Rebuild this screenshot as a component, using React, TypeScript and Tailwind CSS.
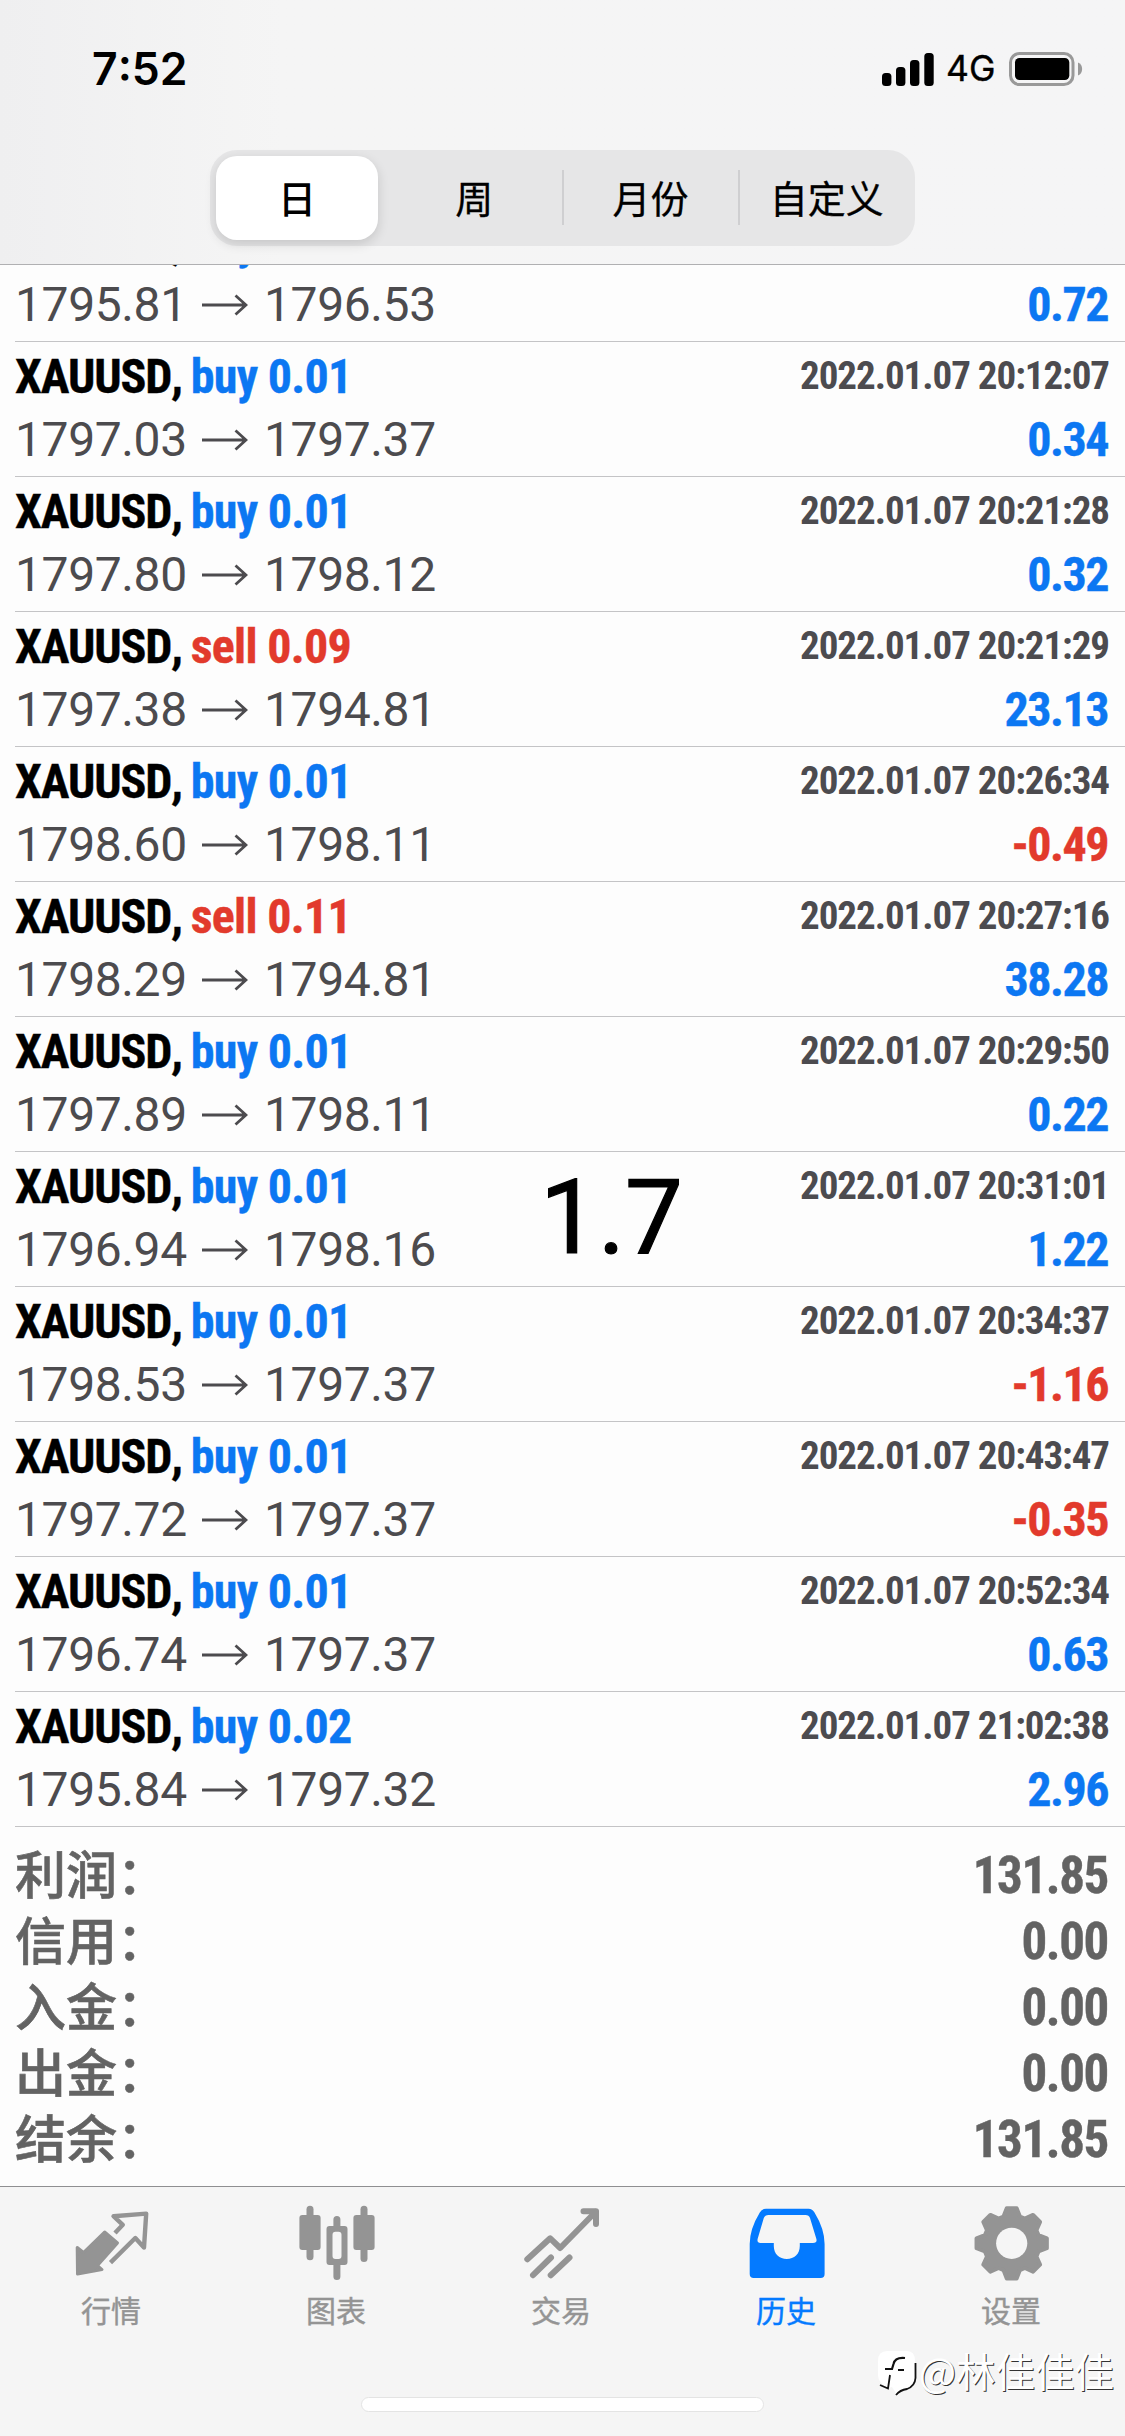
import clsx from "clsx";
import React from "react";

type Deal = {
  side: 'buy' | 'sell'
  volume: string
  open: string
  close: string
  time?: string
  profit: string
}

const deals: Deal[] = [
  { side: 'buy', volume: '0.01', open: '1795.81', close: '1796.53', profit: '0.72' },
  { side: 'buy', volume: '0.01', open: '1797.03', close: '1797.37', time: '2022.01.07 20:12:07', profit: '0.34' },
  { side: 'buy', volume: '0.01', open: '1797.80', close: '1798.12', time: '2022.01.07 20:21:28', profit: '0.32' },
  { side: 'sell', volume: '0.09', open: '1797.38', close: '1794.81', time: '2022.01.07 20:21:29', profit: '23.13' },
  { side: 'buy', volume: '0.01', open: '1798.60', close: '1798.11', time: '2022.01.07 20:26:34', profit: '-0.49' },
  { side: 'sell', volume: '0.11', open: '1798.29', close: '1794.81', time: '2022.01.07 20:27:16', profit: '38.28' },
  { side: 'buy', volume: '0.01', open: '1797.89', close: '1798.11', time: '2022.01.07 20:29:50', profit: '0.22' },
  { side: 'buy', volume: '0.01', open: '1796.94', close: '1798.16', time: '2022.01.07 20:31:01', profit: '1.22' },
  { side: 'buy', volume: '0.01', open: '1798.53', close: '1797.37', time: '2022.01.07 20:34:37', profit: '-1.16' },
  { side: 'buy', volume: '0.01', open: '1797.72', close: '1797.37', time: '2022.01.07 20:43:47', profit: '-0.35' },
  { side: 'buy', volume: '0.01', open: '1796.74', close: '1797.37', time: '2022.01.07 20:52:34', profit: '0.63' },
  { side: 'buy', volume: '0.02', open: '1795.84', close: '1797.32', time: '2022.01.07 21:02:38', profit: '2.96' },
]

const totals = [
  { label: '利润：', value: '131.85' },
  { label: '信用：', value: '0.00' },
  { label: '入金：', value: '0.00' },
  { label: '出金：', value: '0.00' },
  { label: '结余：', value: '131.85' },
]

const periods = ['日', '周', '月份', '自定义']

// eight teeth, four points each
const gearPoints = Array.from({ length: 8 }, (_, i) => {
  const at = (deg: number, r: number) => {
    const a = ((i * 45 + deg - 90) * Math.PI) / 180
    return `${(38.7 + r * Math.cos(a)).toFixed(2)},${(39.3 + r * Math.sin(a)).toFixed(2)}`
  }
  return [at(-17, 28), at(-8, 35.5), at(8, 35.5), at(17, 28)].join(' ')
}).join(' ')

const QuotesIcon = () => (
  <svg viewBox="0 0 80 80" className="ml-[3px] size-20" fill="none" stroke="currentColor" strokeLinejoin="round">
    <path d="M4.2 43.5 10.5 48.5 31.6 28 44.5 39 24.5 61.5 29 65.5 4.5 70Z" fill="currentColor" strokeWidth="3" />
    <path d="M42 29 49.8 20.8 40.5 12.2 73.2 9.6 71 43.5 62.3 34 37.5 58.6" strokeWidth="4.4" />
  </svg>
)

const ChartIcon = () => (
  <svg viewBox="0 0 80 80" className="ml-[3px] size-20" fill="currentColor">
    <rect x="8.5" y="1.7" width="7" height="54.5" rx="3.5" />
    <rect x="1.4" y="11" width="21.2" height="35" rx="3" />
    <rect x="62.5" y="1.7" width="7" height="56.3" rx="3.5" />
    <rect x="55.4" y="11" width="21.2" height="35" rx="3" />
    <path d="M35.4 24v-8.5a3.5 3.5 0 0 1 7 0V24ZM35.4 59v13.5a3.5 3.5 0 0 0 7 0V59Z" />
    <path fillRule="evenodd" d="M31.5 22h15a3 3 0 0 1 3 3v33a3 3 0 0 1-3 3h-15a3 3 0 0 1-3-3V25a3 3 0 0 1 3-3Zm6 5.7a3 3 0 0 0-3 3V52a3 3 0 0 0 3 3h3a3 3 0 0 0 3-3V30.7a3 3 0 0 0-3-3Z" />
  </svg>
)

const TradeIcon = () => (
  <svg viewBox="0 0 80 80" className="ml-[3px] size-20" fill="none" stroke="currentColor" strokeWidth="6" strokeLinecap="round" strokeLinejoin="round">
    <path d="M4.3 55.3 27.2 34.3 37.2 44 72.5 8" />
    <path d="M60.5 7.2H73V20" />
    <path d="M28 53.5 10 71.2M46.5 53.5 27.7 71.2" />
  </svg>
)

const HistoryIcon = () => (
  <svg viewBox="0 0 80 80" className="ml-[3px] size-20" fill="currentColor">
    <path fillRule="evenodd" d="M18 4.7H60.5Q64.5 4.7 66.5 8.5Q76.6 25 76.6 40V70Q76.6 74 72.6 74H5.7Q1.7 74 1.7 70V40Q1.7 25 11.8 8.5Q14 4.7 18 4.7ZM20.5 11Q17 11 15.8 14L9.6 35Q8.8 39 12.5 39H25.8V42C25.8 50 31.5 55 38.8 55S51.8 50 51.8 42V39H65Q69.4 39 68.4 35L62 14Q61 11 57.5 11Z" />
  </svg>
)

const SettingsIcon = () => (
  <svg viewBox="0 0 80 80" className="ml-[3px] size-20">
    <polygon points={gearPoints} fill="currentColor" stroke="currentColor" strokeWidth="4" strokeLinejoin="round" />
    <circle cx="38.7" cy="39.3" r="15.6" fill="#f5f5f5" />
  </svg>
)

const tabs = [
  { label: '行情', icon: QuotesIcon },
  { label: '图表', icon: ChartIcon },
  { label: '交易', icon: TradeIcon },
  { label: '历史', icon: HistoryIcon, active: true },
  { label: '设置', icon: SettingsIcon },
]

const StatusBar = () => (
  <div className="flex h-[138px] items-center justify-between pl-[92px] pr-[42px]">
    <span className="mt-px font-['Inter',sans-serif] text-[44.5px] font-semibold leading-none">7:52</span>
    <div className="flex items-center">
      <svg viewBox="0 0 52 33" className="h-[33px] w-[52px]">
        <rect x="0" y="20" width="9.4" height="13" rx="3.5" />
        <rect x="14" y="14" width="9.4" height="19" rx="3.5" />
        <rect x="28" y="7" width="9.4" height="26" rx="3.5" />
        <rect x="42.3" y="0" width="9.4" height="33" rx="3.5" />
      </svg>
      <span className="ml-3 w-[51px] whitespace-nowrap font-['Inter',sans-serif] text-[35.5px] leading-none [-webkit-text-stroke:0.4px_black]">4G</span>
      <svg viewBox="0 0 74 34" className="ml-3 h-[34px] w-[74px]">
        <rect x="1.5" y="1.5" width="62.5" height="31" rx="9" fill="none" stroke="#999" strokeWidth="3" />
        <rect x="6" y="6" width="54.3" height="22" rx="4.5" />
        <path d="M69 10.5C74.5 12 74.5 22 69 23.5Z" fill="#999" />
      </svg>
    </div>
  </div>
)

const DealRow = ({ deal }: { deal: Deal }) => (
  <li className="ml-[15px] h-[135px] shrink-0 border-b border-[#c4c4c6] pr-4 pt-[3px] leading-[63px]">
    <div className="flex h-[63px] justify-between font-bold [font-stretch:75%]">
      <p className="text-[48px] [-webkit-text-stroke:0.4px_currentColor]">
        <span className="tracking-[-1.2px]">XAUUSD,</span>
        <span className={clsx('ml-[9px] tracking-[-0.7px]', deal.side === 'buy' ? 'text-[#0c77f2]' : 'text-[#e23a2c]')}>
          {deal.side} {deal.volume}
        </span>
      </p>
      {deal.time && <p className="text-[39px] tracking-[-1.05px] text-[#4c4b4f]">{deal.time}</p>}
    </div>
    <div className="flex justify-between text-[48px]">
      <p className="flex items-center tracking-[-0.4px] text-[#4c4b4e]">
        <span className="w-[187px]">{deal.open}</span>
        <svg viewBox="0 0 46 22" className="h-[22px] w-[46px]" fill="none" stroke="currentColor" strokeWidth="2.8">
          <path d="M0 11H44M33.5 1.5 44 11 33.5 20.5" />
        </svg>
        <span className="ml-4">{deal.close}</span>
      </p>
      <p className={clsx('mr-px font-bold tracking-[-1.5px] [-webkit-text-stroke:0.4px_currentColor] [font-stretch:75%]', deal.profit.startsWith('-') ? 'text-[#e23a2c]' : 'text-[#0c77f2]')}>
        {deal.profit}
      </p>
    </div>
  </li>
)

const Watermark = () => (
  <div className="absolute bottom-[37px] right-[11px] flex items-center">
    <svg viewBox="0 0 42 50" className="mt-1 h-[50px] w-[42px]" fill="none">
      <path d="M10 2H30Q38 2 38 12V28Q38 37 29 40L20 46 15 38 11 39Q1 34 1 26V12Q1 2 10 2Z" fill="#fff" />
      <path d="M38.5 14V29Q38 37 30 40Q23 41 19 46M3 36 11 39.5 13 26" stroke="#111" strokeWidth="1.8" />
      <path d="M28 9Q18 8 16.5 15L15 20H8M21 21H27" stroke="#111" strokeWidth="2.2" />
    </svg>
    <span className="-mt-1 font-['Noto_Sans_CJK_SC',sans-serif] text-[39.5px] leading-[50px] text-white [text-shadow:1px_1px_0_#333]">@林佳佳佳</span>
  </div>
)

const App = () => {
  return (
    <div className="relative flex h-[2436px] w-[1125px] flex-col overflow-hidden bg-[#fdfdfd] font-['Roboto','Noto_Sans_CJK_SC',sans-serif] text-black [font-kerning:none]">
      <header className="h-[265px] shrink-0 border-b border-[#b0b0b2] bg-linear-to-r from-[#efeff0] via-[#f5f5f5] via-25% to-[#f5f5f6]">
        <StatusBar />
        <div className="mx-auto mt-3 grid h-24 w-[705px] grid-cols-4 rounded-[27px] bg-[#e6e6e7] py-1.5">
          {periods.map((period, i) => (
            <button
              key={period}
              className={clsx(
                "relative pb-[3px] text-[38px] leading-none font-['Noto_Sans_CJK_SC',sans-serif]",
                i === 0 && 'ml-1.5 mr-2 rounded-[21px] bg-white font-medium shadow-[0_4px_12px_rgba(0,0,0,0.14)]',
                i > 0 && '[-webkit-text-stroke:0.3px_black]'
              )}
            >
              {i > 1 && <span className="absolute -left-px top-3.5 h-[55px] w-0.5 bg-[#cfcfd1]" />}
              {period}
            </button>
          ))}
        </div>
      </header>

      <main className="flex h-[1921px] shrink-0 flex-col overflow-hidden">
        <ul className="-mt-[58px]">
          {deals.map(deal => <DealRow key={deal.open} deal={deal} />)}
        </ul>
        <dl className="pl-[15px] pr-[17px] pt-[15px] text-[51px] leading-[66px] text-[#636363]">
          {totals.map(({ label, value }) => (
            <div key={label} className="flex h-[66px] justify-between">
              <dt className="-mt-[3px] font-['Noto_Sans_CJK_SC',sans-serif] font-medium [-webkit-text-stroke:0.6px_currentColor]">{label}</dt>
              <dd className="mt-px font-bold tracking-[-1.4px] [-webkit-text-stroke:0.4px_currentColor] [font-stretch:75%]">{value}</dd>
            </div>
          ))}
        </dl>
      </main>

      <footer className="flex h-[250px] flex-col items-center border-t border-[#8f8f91] bg-[#f5f5f5]">
        <nav className="-ml-[3px] grid w-[1125px] grid-cols-5 pt-[17px]">
          {tabs.map(({ label, icon: Icon, active }) => (
            <a key={label} className={clsx('flex flex-col items-center', active ? 'text-[#047aff]' : 'text-[#949494]')}>
              <Icon />
              <span className="mt-[7px] font-['Noto_Sans_CJK_SC',sans-serif] text-[30px] leading-9 [-webkit-text-stroke:0.4px_currentColor]">{label}</span>
            </a>
          ))}
        </nav>
        <div className="mt-[70px] h-[15px] w-[403px] rounded-full border border-[#e4e4e4] bg-white" />
      </footer>

      <span className="absolute left-[540px] top-[1158px] text-[103px] leading-[120px] [-webkit-text-stroke:1.2px_black]">1.7</span>
      <Watermark />
    </div>
  )
}

export default App
